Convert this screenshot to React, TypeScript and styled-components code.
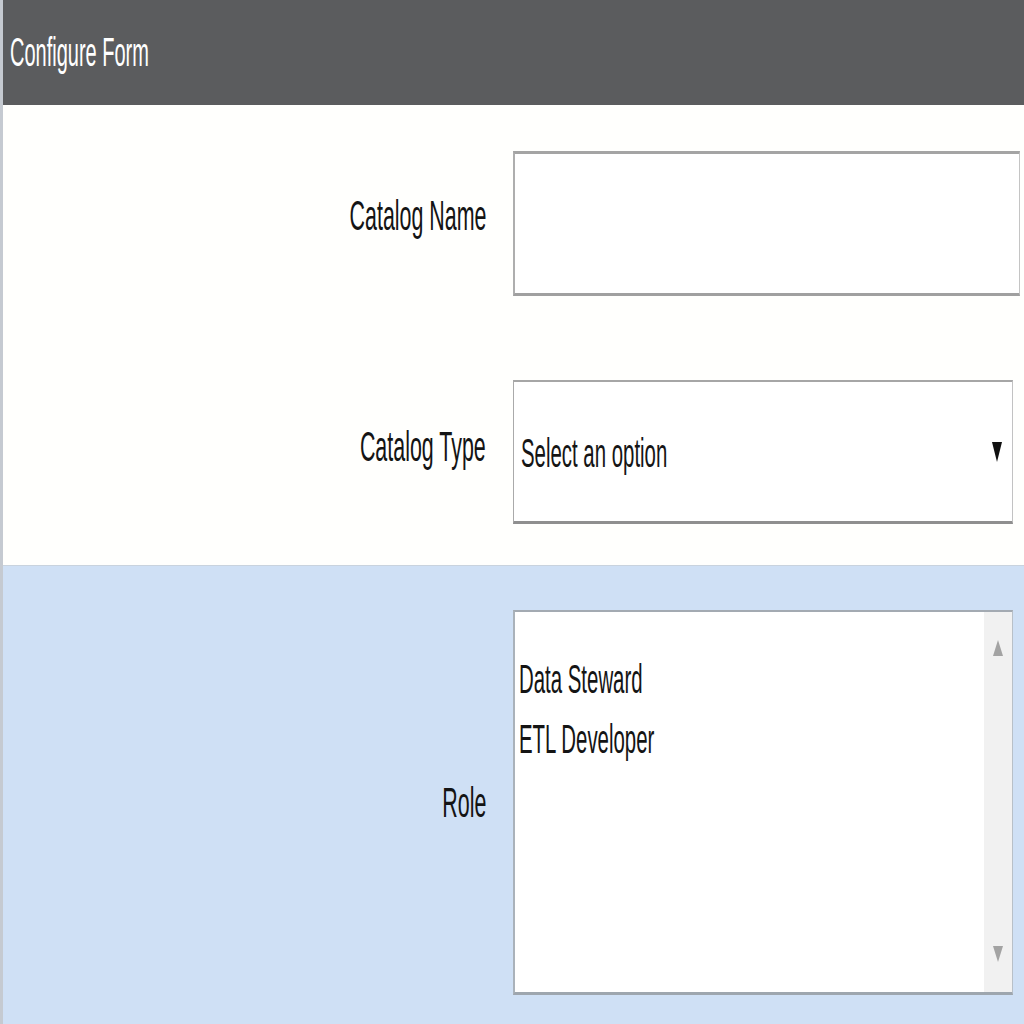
import React from "react";
import styled, { createGlobalStyle } from "styled-components";

const Global = createGlobalStyle`
  html, body { margin: 0; padding: 0; background: #ffffff; }
  body { font-family: "Liberation Sans", Arial, sans-serif; }
  #root { width: 1024px; height: 1024px; overflow: hidden; }
`;

const Page = styled.div`
  width: 1024px;
  height: 1024px;
  box-sizing: border-box;
  display: flex;
  flex-direction: column;
  border-left: 3px solid #c5cad1;
`;

const Header = styled.div`
  height: 105px;
  flex: none;
  background: #5b5c5e;
  display: flex;
  align-items: center;
  padding-left: 7px;
`;

const Narrow = styled.span<{ $origin?: string }>`
  display: inline-block;
  white-space: nowrap;
  font-size: 40px;
  transform: scaleX(0.51);
  transform-origin: ${(p) => p.$origin || "left"} center;
`;

const Title = styled(Narrow)`
  color: #ffffff;
  transform: scaleX(0.5);
`;

const Section = styled.div<{ $tone: "white" | "blue" }>`
  display: flex;
  flex-direction: column;
  background: ${(p) => (p.$tone === "blue" ? "#cfe0f5" : "#fffffd")};
  border-top: ${(p) => (p.$tone === "blue" ? "1px solid #c9d3de" : "none")};
  padding: ${(p) => (p.$tone === "blue" ? "44px 0 0" : "46px 0 41px")};
  gap: 84px;
  flex: ${(p) => (p.$tone === "blue" ? "1" : "none")};
`;

const Row = styled.div`
  display: grid;
  grid-template-columns: 483px 1fr;
  column-gap: 27px;
  align-items: center;
`;

const Label = styled(Narrow)<{ $lift: number }>`
  justify-self: end;
  color: #141414;
  font-size: 42px;
  margin-bottom: ${(p) => p.$lift * 2}px;
`;

const TextBox = styled.input`
  box-sizing: border-box;
  width: 507px;
  height: 145px;
  background: #ffffff;
  border-style: solid;
  border-color: #a4a4a4 #c4c4c4 #a0a0a0 #aeaeae;
  border-width: 3px 1px 3px 2px;
  outline: none;
  margin: 0;
  padding: 0;
`;

const SelectBox = styled.div`
  box-sizing: border-box;
  width: 500px;
  height: 144px;
  background: #ffffff;
  border-style: solid;
  border-color: #a6a6a6 #c2c2c2 #8f8f8f #aaaaaa;
  border-width: 2px 1px 3px 1px;
  display: flex;
  align-items: center;
  justify-content: space-between;
  padding: 4px 10px 0 7px;
  color: #151515;
`;

const Caret = styled.svg`
  width: 10px;
  height: 22px;
  flex: none;
  margin-bottom: 6px;
`;

const ListBox = styled.div`
  box-sizing: border-box;
  width: 500px;
  height: 385px;
  background: #ffffff;
  border-style: solid;
  border-color: #a3aab2 #b8c0c8 #9ea6ae #aab2ba;
  border-width: 2px 1px 3px 2px;
  display: flex;
`;

const Options = styled.div`
  flex: 1;
  display: flex;
  flex-direction: column;
  padding: 37px 0 0 4px;
`;

const Option = styled.div`
  height: 60px;
  line-height: 60px;
  color: #141414;
`;

const ScrollTrack = styled.div`
  width: 28px;
  flex: none;
  background: #f1f1f1;
  display: flex;
  flex-direction: column;
  justify-content: space-between;
  align-items: center;
  padding: 28px 0 30px;
`;

const ScrollArrow = styled.svg`
  width: 10px;
  height: 16px;
`;

export default function App() {
  return (
    <>
      <Global />
      <Page>
        <Header>
          <Title>Configure Form</Title>
        </Header>
        <Section $tone="white">
          <Row>
            <Label $origin="right" $lift={8}>Catalog Name</Label>
            <TextBox type="text" aria-label="Catalog Name" />
          </Row>
          <Row>
            <Label $origin="right" $lift={5}>Catalog Type</Label>
            <SelectBox>
              <Narrow>Select an option</Narrow>
              <Caret viewBox="0 0 10 22">
                <polygon points="0,2 10,2 5,22" fill="#111" />
              </Caret>
            </SelectBox>
          </Row>
        </Section>
        <Section $tone="blue">
          <Row>
            <Label $origin="right" $lift={0}>Role</Label>
            <ListBox>
              <Options>
                <Option>
                  <Narrow>Data Steward</Narrow>
                </Option>
                <Option>
                  <Narrow>ETL Developer</Narrow>
                </Option>
              </Options>
              <ScrollTrack>
                <ScrollArrow viewBox="0 0 10 16">
                  <polygon points="5,0 10,16 0,16" fill="#a3a3a3" />
                </ScrollArrow>
                <ScrollArrow viewBox="0 0 10 16">
                  <polygon points="0,0 10,0 5,16" fill="#a3a3a3" />
                </ScrollArrow>
              </ScrollTrack>
            </ListBox>
          </Row>
        </Section>
      </Page>
    </>
  );
}
